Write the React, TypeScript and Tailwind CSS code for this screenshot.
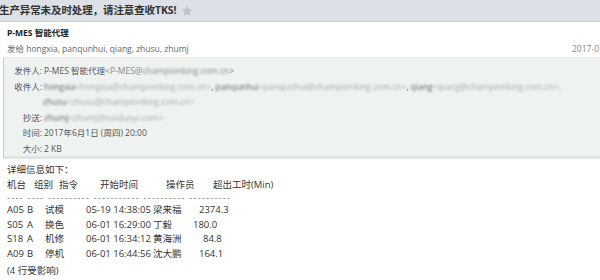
import React from 'react';

const FONT = "font-['Open_Sans','Noto_Sans_CJK_SC',sans-serif]";

const rows = [
  { m: 'A05', g: 'B', cmd: '试模', t: '05-19 14:38:05', op: '梁来福', v: '2374.3', w: 'w-[46px]' },
  { m: 'S05', g: 'A', cmd: '换色', t: '06-01 16:29:00', op: '丁毅', v: '180.0', w: 'w-[40px]' },
  { m: 'S18', g: 'A', cmd: '机修', t: '06-01 16:34:12', op: '黄海洲', v: '84.8', w: 'w-[50px]' },
  { m: 'A09', g: 'B', cmd: '停机', t: '06-01 16:44:56', op: '沈大鹏', v: '164.1', w: 'w-[46px]' },
];

const Star = () => (
  <svg width="12" height="12" viewBox="0 0 24 24" className="ml-[5px]">
    <path
      d="M12 1.5l3.1 6.9 7.4.7-5.6 5 1.7 7.4L12 17.6l-6.6 3.9 1.7-7.4-5.6-5 7.4-.7z"
      fill="#bcc3cb"
    />
  </svg>
);

// blurred address, name darker than the mail part
const Addr = ({ name, mail }: { name: string; mail: string }) => (
  <span className="blur-[1.2px]">
    <span className="text-[#666]">{name}</span>
    <span className="text-[#aaa]">&lt;{mail}&gt;</span>
  </span>
);

const Field = ({ label, children }: { label: string; children: React.ReactNode }) => (
  <div className="flex">
    <span className="w-[38px] text-right">{label}</span>
    <span className="ml-[2px] whitespace-nowrap">{children}</span>
  </div>
);

const App = () => {
  return (
    <div className={`w-[600px] h-[280px] overflow-hidden bg-white ${FONT}`}>
      {/* title bar */}
      <div className="h-[22px] bg-[#dce0e7] border-b border-[#c9cdd3] flex items-center">
        <span className="text-[10.5px] font-bold text-[#333] tracking-[-0.1px] ml-[-1px]">
          生产异常未及时处理，请注意查收TKS!
        </span>
        <Star />
      </div>

      {/* header */}
      <div className="h-[35px] pl-[7px]">
        <div className="pt-[5px] text-[8.5px] font-bold text-[#222] leading-[11px]">P-MES 智能代理</div>
        <div className="flex items-center mt-[5px] text-[8.5px] text-[#666] leading-[11px]">
          <span className="flex-1">发给 hongxia, panqunhui, qiang, zhusu, zhumj</span>
          <span className="text-[#888] pr-[1px]">2017-0</span>
        </div>
      </div>

      {/* details box */}
      <div className="ml-[3px] h-[102px] bg-[#eef3f2] border-l border-[#c5cbc9] border-t border-t-[#e4eae8] border-b-[3px] border-b-[#dfe6e4] pt-[5px] text-[8.5px] text-[#555] leading-[15.5px]">
        <Field label="发件人:">
          P-MES 智能代理<span className="text-[#888]">&lt;P-MES@<span className="blur-[0.8px]">championking.com.cn</span>&gt;</span>
        </Field>
        <Field label="收件人:">
          <Addr name="hongxia" mail="hongxia@championking.com.cn" />,{' '}
          <Addr name="panqunhui" mail="panqunhui@championking.com.cn" />,{' '}
          <Addr name="qiang" mail="qiang@championking.com.cn" />
          <span className="blur-[1.2px] text-[#aaa]">,</span>
        </Field>
        <div className="pl-[39px]">
          <Addr name="zhusu" mail="zhusu@championking.com.cn" />
        </div>
        <Field label="抄送:">
          <Addr name="zhumj" mail="zhumj@naiduoyi.com" />
        </Field>
        <Field label="时间:">2017年6月1日 (周四) 20:00</Field>
        <Field label="大小:">2 KB</Field>
      </div>

      {/* body */}
      <div className="pl-[7px] pt-[4px] text-[9.5px] text-[#333] leading-[14.5px]">
        <div>详细信息如下：</div>
        <div className="flex">
          <span className="w-[27px]">机台</span>
          <span className="w-[25px]">组别</span>
          <span className="w-[41px]">指令</span>
          <span className="w-[66px]">开始时间</span>
          <span className="w-[47px]">操作员</span>
          <span>超出工时(Min)</span>
        </div>
        <div className="leading-[11px] text-[#777] tracking-[1.15px] whitespace-pre">
          {'---- ---- ---------- ----------- ---------- ----------'}
        </div>
        <div>
          {rows.map((r) => (
            <div key={r.m} className="flex">
              <span className="w-[20px]">{r.m}</span>
              <span className="w-[18px]">{r.g}</span>
              <span className="w-[41px]">{r.cmd}</span>
              <span className="w-[67px]">{r.t}</span>
              <span className={r.w}>{r.op}</span>
              <span>{r.v}</span>
            </div>
          ))}
        </div>
        <div className="mt-[3px]">(4 行受影响)</div>
      </div>
    </div>
  );
};

export default App;
